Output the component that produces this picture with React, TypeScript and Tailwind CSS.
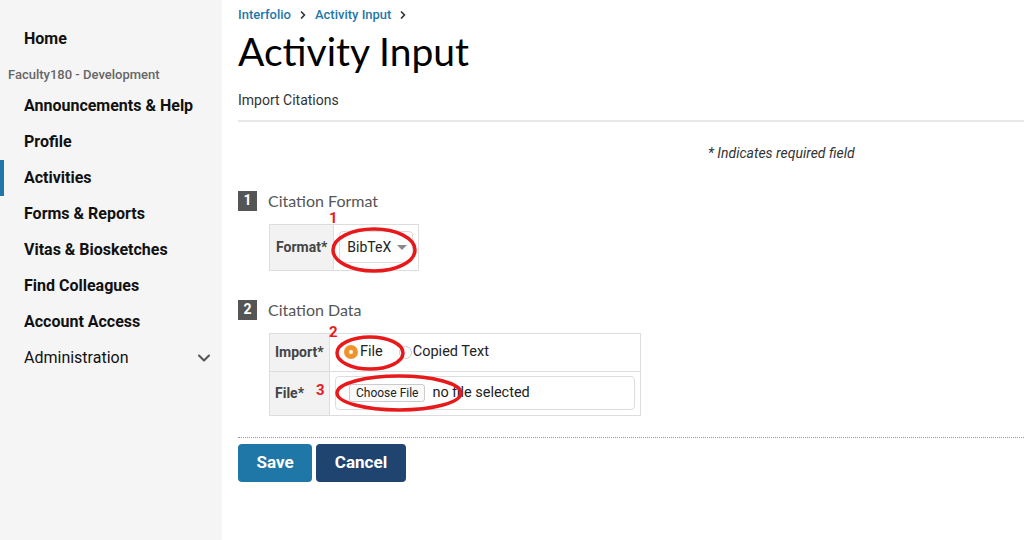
import { ChevronDown, ChevronRight } from "lucide-react"

const navItems = [
  "Announcements & Help",
  "Profile",
  "Activities",
  "Forms & Reports",
  "Vitas & Biosketches",
  "Find Colleagues",
  "Account Access",
]

function SectionTitle({ num, label }: { num: string; label: string }) {
  return (
    <div className="flex items-center gap-[11px]">
      <span className="flex h-[20px] w-[19px] items-center justify-center bg-[#555] text-[14px] font-bold text-white">
        {num}
      </span>
      <span className="font-['Lato'] text-[16px] text-[#555]">{label}</span>
    </div>
  )
}

export default function App() {
  return (
    <div className="relative flex h-[540px] w-[1024px] overflow-hidden bg-white font-['Roboto',sans-serif] text-[#111]">
      <aside className="h-full w-[222px] shrink-0 bg-[#f5f5f5]">
        <div className="pl-[24px] pt-[29px] text-[16px] font-bold leading-[20px]">Home</div>
        <div className="pl-[8px] pt-[16px] text-[13px] font-medium leading-[20px] text-[#666]">
          Faculty180 - Development
        </div>
        <ul className="mt-[3px]">
          {navItems.map((item) => (
            <li
              key={item}
              className={
                item === "Activities"
                  ? "flex h-[36px] items-center border-l-[4px] border-[#1f78a9] pl-[20px] text-[16px] font-bold"
                  : "flex h-[36px] items-center pl-[24px] text-[16px] font-bold"
              }
            >
              {item}
            </li>
          ))}
          <li className="flex h-[36px] items-center justify-between pl-[24px] pr-[8px] text-[16px]">
            Administration
            <ChevronDown className="h-[20px] w-[20px] text-[#555]" strokeWidth={2.5} />
          </li>
        </ul>
      </aside>

      <main className="flex-1 pl-[16px]">
        <nav className="flex items-center gap-[6px] pt-[5px] text-[13px] font-medium text-[#1f78a9]">
          <span>Interfolio</span>
          <ChevronRight className="h-[12px] w-[12px] text-[#333]" strokeWidth={3.5} />
          <span>Activity Input</span>
          <ChevronRight className="h-[12px] w-[12px] text-[#333]" strokeWidth={3.5} />
        </nav>
        <h1 className="mt-[2px] font-['Lato'] text-[39px] leading-[48px] text-black">Activity Input</h1>
        <div className="mt-[15px] text-[14px] text-[#333]">Import Citations</div>
        <div className="mt-[9px] h-[2px] bg-[#e8e8e8]" />

        <div className="mt-[21px] pl-[470px] text-[14px] italic text-[#333]">* Indicates required field</div>

        <div className="mt-[25px]">
          <SectionTitle num="1" label="Citation Format" />
          <table className="ml-[31px] mt-[11px] border-collapse border border-[#ddd] text-[14px]">
            <tbody>
              <tr>
                <td className="h-[46px] w-[64px] border border-[#ddd] bg-[#f2f2f2] px-[6px] font-bold text-[#444]">
                  Format*
                </td>
                <td className="border border-[#ddd] px-[5px]">
                  <div className="flex h-[32px] w-[74px] items-center gap-[6px] rounded-[4px] border border-[#ddd] px-[7px] text-[#222]">
                    BibTeX
                    <span className="h-0 w-0 border-x-[5px] border-t-[5px] border-x-transparent border-t-[#888]" />
                  </div>
                </td>
              </tr>
            </tbody>
          </table>
        </div>

        <div className="mt-[27px]">
          <SectionTitle num="2" label="Citation Data" />
          <table className="ml-[31px] mt-[11px] w-[372px] border-collapse border border-[#ddd] text-[14px]">
            <tbody>
              <tr>
                <td className="h-[38px] w-[60px] border border-[#ddd] bg-[#f2f2f2] px-[5px] font-bold text-[#444]">
                  Import*
                </td>
                <td className="border border-[#ddd] pl-[14px]">
                  <div className="flex items-center">
                    <span className="flex h-[14px] w-[14px] items-center justify-center rounded-full bg-[#f0932b]">
                      <span className="h-[4px] w-[4px] rounded-full bg-white" />
                    </span>
                    <span className="ml-[2px] text-[14.5px] text-[#222]">File</span>
                    <span className="ml-[16px] h-[13px] w-[13px] rounded-full border border-[#ccc] bg-white" />
                    <span className="ml-[1px] text-[14.5px] text-[#222]">Copied Text</span>
                  </div>
                </td>
              </tr>
              <tr>
                <td className="h-[44px] border border-[#ddd] bg-[#f2f2f2] px-[5px] font-bold text-[#444]">File*</td>
                <td className="border border-[#ddd] px-[5px]">
                  <div className="flex h-[34px] items-center rounded-[4px] border border-[#ddd] pl-[13px]">
                    <span className="flex h-[18px] items-center rounded-[3px] border border-[#ccc] bg-[#fafafa] px-[6px] text-[12px] text-[#222]">
                      Choose File
                    </span>
                    <span className="ml-[7px] text-[14.5px] text-[#222]">no file selected</span>
                  </div>
                </td>
              </tr>
            </tbody>
          </table>
        </div>

        <div className="mt-[21px] border-t border-dotted border-[#999]" />
        <div className="mt-[6px] flex gap-[4px]">
          <button className="h-[38px] w-[74px] rounded-[4px] bg-[#1e77a6] text-[17px] font-bold text-white">Save</button>
          <button className="h-[38px] w-[90px] rounded-[4px] bg-[#1f4470] text-[17px] font-bold text-white">
            Cancel
          </button>
        </div>
      </main>

      {/* red annotations drawn over the form */}
      <svg className="pointer-events-none absolute left-0 top-0" width="1024" height="540">
        <ellipse cx="374" cy="250" rx="41" ry="21" fill="none" stroke="#e8191b" strokeWidth="3.5" />
        <ellipse cx="370" cy="353" rx="33" ry="16" fill="none" stroke="#e8191b" strokeWidth="3.5" />
        <ellipse cx="399" cy="393" rx="62" ry="17" fill="none" stroke="#e8191b" strokeWidth="3.5" />
      </svg>
      <span className="pointer-events-none absolute left-[329px] top-[209px] text-[15px] font-bold leading-[18px] text-[#e8191b]">1</span>
      <span className="pointer-events-none absolute left-[329px] top-[323px] text-[15px] font-bold leading-[18px] text-[#e8191b]">2</span>
      <span className="pointer-events-none absolute left-[316px] top-[381px] text-[15px] font-bold leading-[18px] text-[#e8191b]">3</span>
    </div>
  )
}
